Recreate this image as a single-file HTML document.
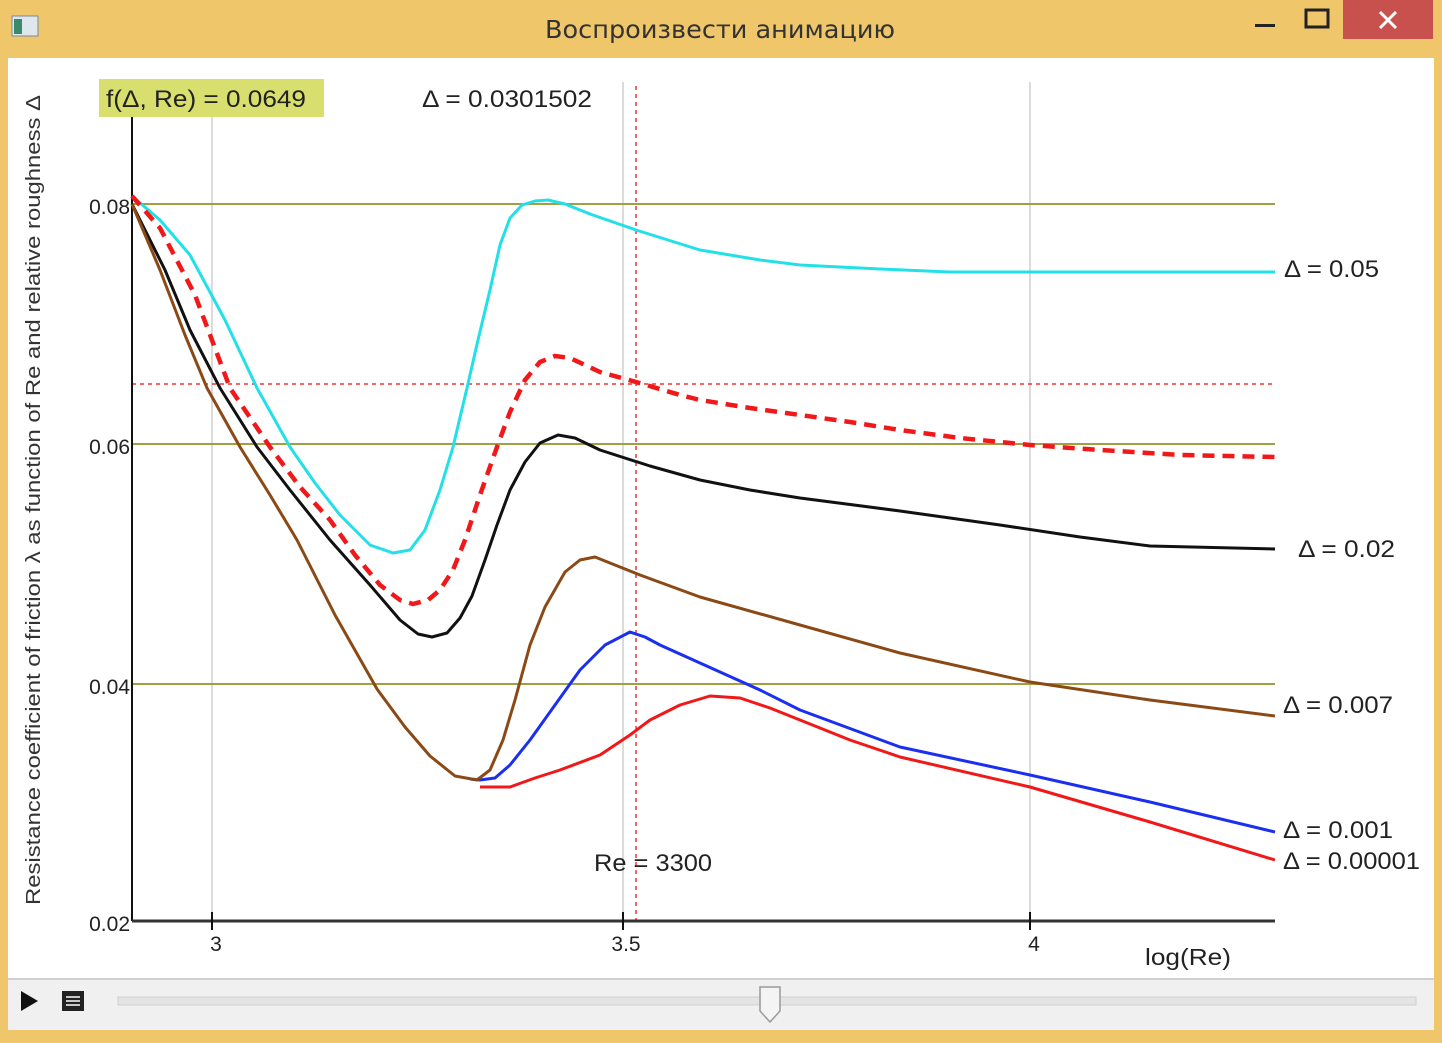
<!DOCTYPE html>
<html><head><meta charset="utf-8"><style>
body{margin:0;width:1442px;height:1038px;overflow:hidden;background:#efc76a;font-family:"Liberation Sans",sans-serif}
</style></head><body>
<svg width="1442" height="1038" xmlns="http://www.w3.org/2000/svg" font-family="Liberation Sans, sans-serif">
<rect width="1442" height="1038" fill="#efc76a"/>
<rect x="12" y="16" width="26" height="20" fill="#dfe7ee" stroke="#7a8a99"/>
<rect x="14" y="19" width="8" height="15" fill="#3a8a6a"/>
<text x="720" y="38" text-anchor="middle" font-size="25" fill="#333" font-family="DejaVu Sans, sans-serif" textLength="350" lengthAdjust="spacingAndGlyphs">Воспроизвести анимацию</text>
<rect x="1255" y="24" width="20" height="3" fill="#222"/>
<rect x="1306" y="10" width="22" height="17" fill="none" stroke="#222" stroke-width="3"/>
<rect x="1343" y="0" width="90" height="39" fill="#c9514d"/>
<path d="M1380 12 L1396 28 M1396 12 L1380 28" stroke="#fff" stroke-width="3"/>
<rect x="8" y="58" width="1426" height="920" fill="#fff"/>
<rect x="8" y="978" width="1426" height="52" fill="#f0f0f0"/>
<line x1="8" y1="979" x2="1434" y2="979" stroke="#d0d0d0" stroke-width="2"/>
<g stroke="#cfcfcf" stroke-width="1.5"><line x1="212" y1="88" x2="212" y2="921"/><line x1="623" y1="82" x2="623" y2="921"/><line x1="1030" y1="82" x2="1030" y2="921"/></g>
<g stroke="#a0a040" stroke-width="2"><line x1="132" y1="204" x2="1275" y2="204"/><line x1="132" y1="444" x2="1275" y2="444"/><line x1="132" y1="684" x2="1275" y2="684"/></g>
<line x1="636" y1="86" x2="636" y2="921" stroke="#e33" stroke-width="1.5" stroke-dasharray="4,4"/>
<line x1="132" y1="384" x2="1275" y2="384" stroke="#e33" stroke-width="1.5" stroke-dasharray="4,4"/>
<line x1="132" y1="88" x2="132" y2="921" stroke="#111" stroke-width="2"/>
<line x1="132" y1="921" x2="1275" y2="921" stroke="#333" stroke-width="3"/>
<g stroke="#111" stroke-width="2"><line x1="212" y1="912" x2="212" y2="930"/><line x1="623" y1="912" x2="623" y2="930"/><line x1="1030" y1="912" x2="1030" y2="930"/></g>
<g fill="none" stroke-width="3" stroke-linejoin="round">
<polyline stroke="#22e0e8" points="132,196 160,220 190,255 225,320 257,388 290,447 315,483 340,515 370,545 393,553 410,550 425,530 440,490 453,447 467,388 478,340 490,290 500,245 510,218 522,205 535,201 548,200 565,204 590,214 636,230 700,250 760,260 800,265 880,269 950,272 1275,272"/>
<polyline stroke="#111" points="132,204 165,270 190,330 220,388 257,447 290,490 330,540 370,585 400,620 418,634 432,637 447,633 460,618 472,596 485,560 497,525 510,490 525,462 540,443 558,435 575,438 600,450 650,466 700,480 750,490 800,498 900,511 1000,525 1080,537 1150,546 1275,549"/>
<polyline stroke="#f01818" stroke-width="3" points="480,787 510,787 535,778 560,770 600,755 630,735 650,720 680,705 710,696 740,698 770,708 800,720 850,740 900,757 1030,787 1150,822 1275,860"/>
<polyline stroke="#1a2ff0" points="470,779 480,780 495,778 510,765 530,740 555,705 580,670 605,645 630,632 645,637 660,645 720,672 760,690 800,710 900,747 1030,775 1150,802 1275,832"/>
<polyline stroke="#8b4a15" points="132,204 160,270 185,335 207,388 240,447 270,495 297,540 335,615 377,689 405,727 430,756 455,776 477,780 490,770 503,740 515,700 530,645 545,607 565,572 580,560 595,557 615,565 640,575 700,597 800,625 900,653 1030,682 1150,700 1275,716"/>
<polyline stroke="#f01818" stroke-width="4.5" stroke-dasharray="12,8" points="132,196 160,228 195,295 230,388 270,447 300,487 330,520 355,555 380,585 400,600 413,604 428,600 440,590 453,570 465,540 480,495 497,447 510,412 525,380 540,362 555,356 570,358 600,372 636,382 680,395 700,400 750,408 800,415 850,422 900,430 960,438 1030,445 1100,450 1180,455 1275,457"/>
</g>
<g font-size="24" fill="#222">
<text x="1284" y="277" textLength="95" lengthAdjust="spacingAndGlyphs">Δ = 0.05</text>
<text x="1298" y="557" textLength="97" lengthAdjust="spacingAndGlyphs">Δ = 0.02</text>
<text x="1283" y="713" textLength="110" lengthAdjust="spacingAndGlyphs">Δ = 0.007</text>
<text x="1283" y="838" textLength="110" lengthAdjust="spacingAndGlyphs">Δ = 0.001</text>
<text x="1283" y="869" textLength="137" lengthAdjust="spacingAndGlyphs">Δ = 0.00001</text>
<text x="594" y="871" textLength="118" lengthAdjust="spacingAndGlyphs">Re = 3300</text>
<text x="422" y="107" textLength="170" lengthAdjust="spacingAndGlyphs">Δ = 0.0301502</text>
</g>
<rect x="99" y="79" width="225" height="38" fill="#d8df6e"/>
<text x="106" y="107" font-size="24" fill="#222" textLength="200" lengthAdjust="spacingAndGlyphs">f(Δ, Re) = 0.0649</text>
<g font-size="21" fill="#222" text-anchor="end">
<text x="130" y="214">0.08</text><text x="130" y="454">0.06</text><text x="130" y="694">0.04</text><text x="130" y="931">0.02</text>
</g>
<g font-size="21" fill="#222" text-anchor="middle">
<text x="216" y="951">3</text><text x="626" y="951">3.5</text><text x="1034" y="951">4</text>
</g>
<text x="1188" y="965" font-size="23" fill="#222" text-anchor="middle" textLength="86" lengthAdjust="spacingAndGlyphs">log(Re)</text>
<text transform="translate(40,500) rotate(-90)" font-size="20" fill="#333" text-anchor="middle" textLength="810" lengthAdjust="spacingAndGlyphs">Resistance coefficient of friction λ as function of Re and relative roughness Δ</text>
<path d="M21 991 L38 1001 L21 1011 Z" fill="#111"/>
<rect x="62" y="991" width="22" height="20" fill="#222"/>
<g stroke="#fff" stroke-width="1.5"><line x1="66" y1="997" x2="80" y2="997"/><line x1="66" y1="1001" x2="80" y2="1001"/><line x1="66" y1="1005" x2="80" y2="1005"/></g>
<rect x="118" y="997" width="1298" height="8" fill="#e4e4e4" stroke="#d0d0d0"/>
<path d="M760 987 L780 987 L780 1011 L770 1022 L760 1011 Z" fill="#f4f4f4" stroke="#999" stroke-width="1.5"/>
</svg>
</body></html>
